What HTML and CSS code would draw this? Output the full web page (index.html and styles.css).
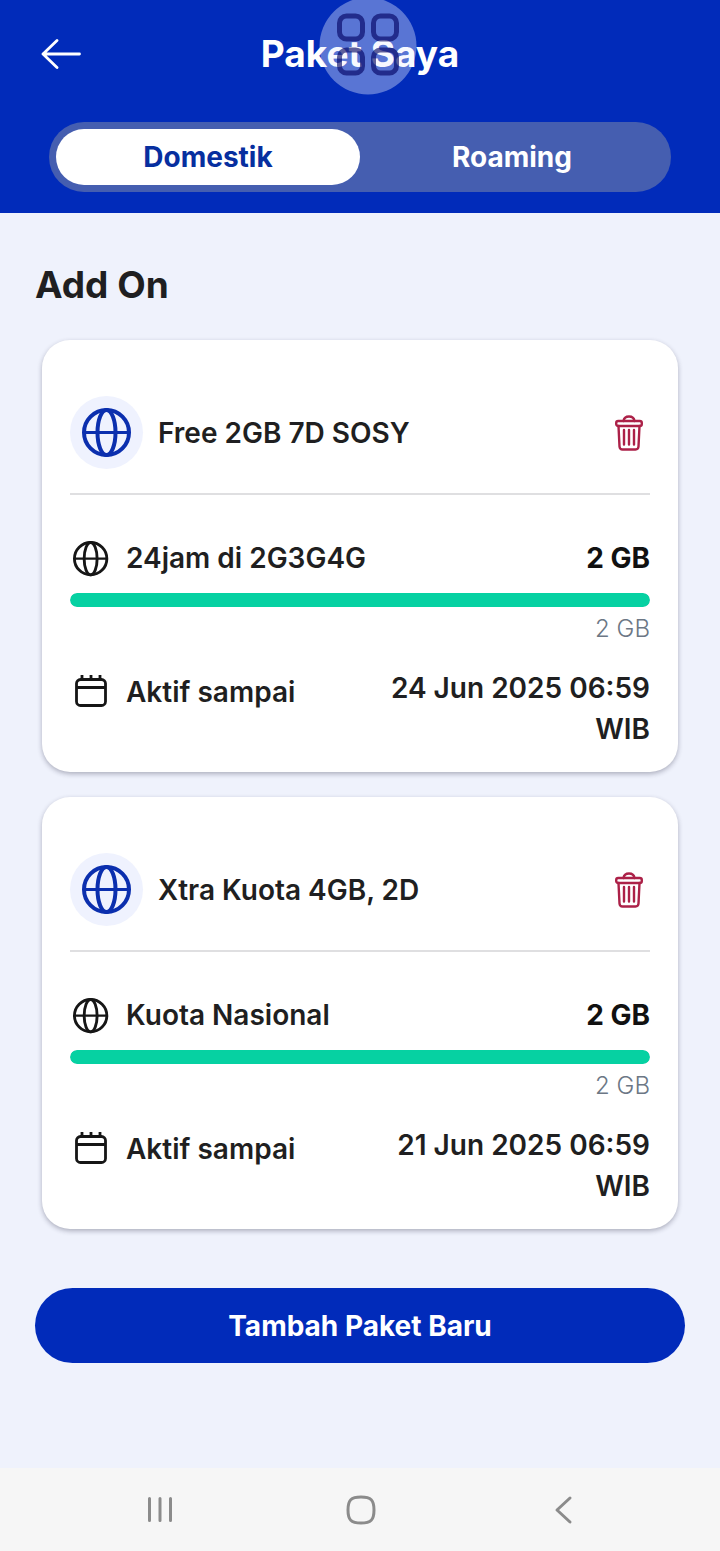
FILE: index.html
```
<!DOCTYPE html>
<html lang="id">
<head>
<meta charset="utf-8">
<meta name="viewport" content="width=device-width, initial-scale=1">
<title>Paket Saya</title>
<link rel="stylesheet" href="styles.css">
</head>
<body>
<svg class="sprite" aria-hidden="true">
  <symbol id="globe" viewBox="0 0 50 50">
    <g fill="none" stroke="currentColor" stroke-width="4">
      <circle cx="24.500" cy="24.500" r="22.5"/>
      <ellipse cx="24.500" cy="24.500" rx="9" ry="22.5"/>
      <path d="M2 24.500H47" stroke-width="3.200"/>
    </g>
  </symbol>
  <symbol id="trash" viewBox="0 0 28 36">
    <g fill="none" stroke="currentColor" stroke-width="2.400" stroke-linejoin="round" stroke-linecap="round">
      <path d="M8.500 6C9 2.800 11 1.500 14 1.500S19 2.800 19.500 6"/>
      <rect x="1.200" y="6" width="25.600" height="5" rx="2"/>
      <path d="M3.500 11L4.500 31.500Q4.700 34.500 7.500 34.500H20.500Q23.300 34.500 23.500 31.500L24.500 11"/>
      <path d="M9 15V29.500M14 15V29.500M19 15V29.500"/>
    </g>
  </symbol>
  <symbol id="calendar" viewBox="0 0 36 36">
    <g fill="none" stroke="currentColor" stroke-width="2.800">
      <rect x="3.500" y="5.500" width="29" height="26" rx="4"/>
      <path d="M3.500 13.500H32.500M9 1V5.500M18 1V5.500M27 1V5.500"/>
    </g>
  </symbol>
</svg>

<div class="screen">
  <header class="header">
    <div class="titlebar">
      <button class="back" type="button" aria-label="Kembali">
        <svg width="40" height="30" viewBox="0 0 40 30" fill="none" stroke="currentColor" stroke-width="2.800" stroke-linecap="round" stroke-linejoin="round"><path d="M38.500 15H2M16 1.500L2 15L16 28.500"/></svg>
      </button>
      <h1 class="title">Paket Saya</h1>
    </div>
    <div class="tabs" role="tablist">
      <button class="tab tab-active" type="button" role="tab" aria-selected="true">Domestik</button>
      <button class="tab" type="button" role="tab" aria-selected="false">Roaming</button>
    </div>
    <svg class="assist" viewBox="0 0 98 98" aria-hidden="true">
      <circle class="assist-disc" cx="49" cy="49" r="48.500"/>
      <g class="assist-grid">
        <rect x="20.500" y="19" width="23" height="23" rx="7"/>
        <rect x="54.500" y="19" width="23" height="23" rx="7"/>
        <rect x="20.500" y="53" width="23" height="23" rx="7"/>
        <rect x="54.500" y="53" width="23" height="23" rx="7"/>
      </g>
    </svg>
  </header>

  <main class="content">
    <h2 class="section-title">Add On</h2>
    <div class="cards">
      <article class="card">
        <div class="card-head">
          <span class="badge"><svg class="badge-icon"><use href="#globe"/></svg></span>
          <h3 class="card-title">Free 2GB 7D SOSY</h3>
          <button class="delete" type="button" aria-label="Hapus paket"><svg class="trash-icon"><use href="#trash"/></svg></button>
        </div>
        <div class="quota">
          <svg class="row-icon"><use href="#globe"/></svg>
          <span class="label">24jam di 2G3G4G</span>
          <strong class="amount">2 GB</strong>
        </div>
        <div class="bar"><div class="bar-fill" style="width:100%"></div></div>
        <p class="total">2 GB</p>
        <div class="expiry">
          <svg class="row-icon"><use href="#calendar"/></svg>
          <span class="label">Aktif sampai</span>
          <time class="date">24 Jun 2025 06:59 WIB</time>
        </div>
      </article>
      <article class="card">
        <div class="card-head">
          <span class="badge"><svg class="badge-icon"><use href="#globe"/></svg></span>
          <h3 class="card-title">Xtra Kuota 4GB, 2D</h3>
          <button class="delete" type="button" aria-label="Hapus paket"><svg class="trash-icon"><use href="#trash"/></svg></button>
        </div>
        <div class="quota">
          <svg class="row-icon"><use href="#globe"/></svg>
          <span class="label">Kuota Nasional</span>
          <strong class="amount">2 GB</strong>
        </div>
        <div class="bar"><div class="bar-fill" style="width:100%"></div></div>
        <p class="total">2 GB</p>
        <div class="expiry">
          <svg class="row-icon"><use href="#calendar"/></svg>
          <span class="label">Aktif sampai</span>
          <time class="date">21 Jun 2025 06:59 WIB</time>
        </div>
      </article>
    </div>
    <button class="add" type="button">Tambah Paket Baru</button>
  </main>

  <nav class="sysbar" aria-label="Navigasi sistem">
    <button class="sys" type="button" aria-label="Aplikasi terbaru"><svg width="32" height="32" viewBox="0 0 32 32"><path d="M5.500 4.500V26.500M16 4.500V26.500M26.500 4.500V26.500"/></svg></button>
    <button class="sys" type="button" aria-label="Beranda"><svg width="32" height="32" viewBox="0 0 32 32"><path d="M16 3C26 3 29 6 29 16S26 29 16 29S3 26 3 16S6 3 16 3Z"/></svg></button>
    <button class="sys" type="button" aria-label="Kembali"><svg width="32" height="32" viewBox="0 0 32 32"><path d="M24 4L11 16L24 28"/></svg></button>
  </nav>
</div>
</body>
</html>
```
FILE: styles.css
```
* { box-sizing: border-box; }

body {
  margin: 0;
  font-family: Inter, "Liberation Sans", sans-serif;
  font-size: 28px;
  font-weight: 600;
  color: #1f1f21;
  background: #eff2fc;
}

h1, h2, h3, p { margin: 0; }

button {
  border: 0;
  padding: 0;
  background: none;
  font: inherit;
  color: inherit;
  cursor: pointer;
}

svg { display: block; }

.sprite { position: absolute; width: 0; height: 0; }

.screen {
  display: flex;
  flex-direction: column;
  min-height: 100vh;
}

.header {
  position: relative;
  padding: 32px 49px 21px;
  background: #012bba;
  color: #fff;
}

.titlebar {
  display: grid;
  grid-template-columns: 40px 1fr 40px;
  align-items: center;
  margin: 0 -8px 46px;
}

.title {
  font-size: 37px;
  line-height: 44px;
  font-weight: 700;
  text-align: center;
}

.tabs {
  display: grid;
  grid-template-columns: 1fr 1fr;
  padding: 7px;
  border-radius: 35px;
  background: #455eb0;
}

.tab {
  height: 56px;
  border-radius: 28px;
  font-weight: 700;
}

.tab-active {
  background: #fff;
  color: #072f9f;
}

.assist {
  position: absolute;
  top: -3px;
  left: calc(50% - 41px);
  width: 98px;
  height: 98px;
}

.assist-disc { fill: rgba(235, 240, 255, .38); }

.assist-grid {
  fill: none;
  stroke: rgba(0, 0, 95, .62);
  stroke-width: 5;
}

.content {
  flex: 1;
  padding: 50px 35px 40px;
}

.section-title {
  font-size: 37px;
  line-height: 44px;
  font-weight: 700;
}

.cards {
  display: grid;
  gap: 25px;
  margin: 33px 7px 59px;
}

.card {
  padding: 56px 28px 22px;
  border-radius: 28px;
  background: #fff;
  box-shadow: 0 2px 5px rgba(30, 30, 60, .32);
}

.card-head {
  display: flex;
  align-items: center;
  gap: 15px;
  padding-bottom: 24px;
  border-bottom: 2px solid #dfdfe1;
}

.badge {
  display: grid;
  place-items: center;
  width: 73px;
  height: 73px;
  border-radius: 50%;
  background: #eff2fe;
}

.badge-icon { width: 50px; height: 50px; color: #0b2fae; }

.card-title {
  flex: 1;
  font-size: 28px;
  line-height: 40px;
  font-weight: 600;
}

.delete { padding: 0 7px; color: #ac2148; }

.trash-icon { width: 28px; height: 36px; }

.quota {
  display: flex;
  align-items: center;
  gap: 17px;
  margin: 43px 0 14px;
  line-height: 41px;
}

.row-icon { flex: none; width: 36px; height: 36px; margin-left: 3px; color: #161616; }

.label { flex: 1; }

.amount { font-weight: 700; color: #111; }

.bar {
  height: 14px;
  border-radius: 7px;
  background: #e3e6ee;
  overflow: hidden;
}

.bar-fill {
  height: 100%;
  border-radius: 7px;
  background: #06d1a2;
}

.total {
  margin: 6px 0 23px;
  font-size: 24px;
  line-height: 32px;
  font-weight: 300;
  color: #6c7785;
  text-align: right;
}

.expiry {
  display: flex;
  align-items: flex-start;
  gap: 17px;
  line-height: 41px;
}

.expiry .row-icon { margin-top: 6px; }

.expiry .label { padding-top: 4px; }

.date { width: 275px; text-align: right; }

.add {
  width: 100%;
  height: 75px;
  border-radius: 38px;
  background: #012bba;
  color: #fff;
  font-weight: 700;
}

.sysbar {
  display: grid;
  grid-template-columns: repeat(3, 1fr);
  padding: 0 58px 0 60px;
  height: 83px;
  background: #f6f6f6;
}

.sys { display: grid; place-items: center; }

.sys svg {
  fill: none;
  stroke: #8b8b8b;
  stroke-width: 3;
  stroke-linecap: round;
  stroke-linejoin: round;
}
```
